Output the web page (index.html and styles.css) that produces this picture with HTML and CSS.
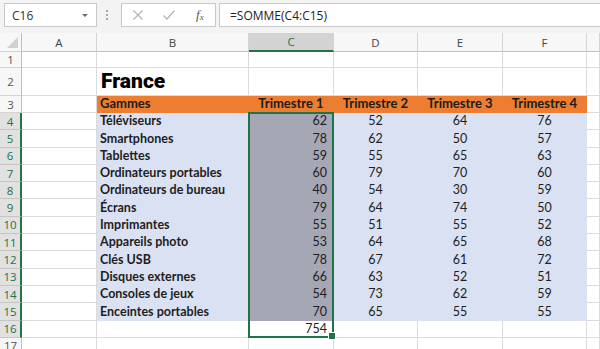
FILE: index.html
```html
<!DOCTYPE html>
<html lang="fr">

<head>
    <meta charset="UTF-8">
    <meta name="viewport" content="width=device-width, initial-scale=1.0">
    <title>France - Ventes par trimestre</title>
    <link rel="stylesheet" href="styles.css">
</head>

<body>
    <div class="formula-bar">
        <div class="name-box">
            <span>C16</span>
            <span class="caret"></span>
        </div>
        <div class="grip"><i></i><i></i><i></i></div>
        <div class="fx-buttons">
            <svg class="icon" width="12" height="12" viewBox="0 0 12 12">
                <path d="M1.5 1.5 L10.5 10.5 M10.5 1.5 L1.5 10.5" stroke="#b4b4b4" stroke-width="1.2" fill="none"/>
            </svg>
            <svg class="icon" width="14" height="12" viewBox="0 0 14 12">
                <path d="M1.5 6.5 L5 10 L12.5 1.5" stroke="#b4b4b4" stroke-width="1.3" fill="none"/>
            </svg>
            <span class="fx">f<sub>x</sub></span>
        </div>
        <div class="formula">=SOMME(C4:C15)</div>
    </div>

    <div class="sheet">
        <div class="row">
            <div class="hd corner"><span class="tri"></span></div>
            <div class="hd col">A</div>
            <div class="hd col">B</div>
            <div class="hd col active">C</div>
            <div class="hd col">D</div>
            <div class="hd col">E</div>
            <div class="hd col">F</div>
            <div class="hd col"></div>
        </div>
        <div class="row">
            <div class="hd num">1</div>
            <div class="c"></div><div class="c"></div><div class="c"></div><div class="c"></div><div class="c"></div><div class="c"></div><div class="c"></div>
        </div>
        <div class="row">
            <div class="hd num">2</div>
            <div class="c"></div>
            <div class="c title">France</div>
            <div class="c"></div><div class="c"></div><div class="c"></div><div class="c"></div><div class="c"></div>
        </div>
        <div class="row">
            <div class="hd num">3</div>
            <div class="c"></div>
            <div class="c head left">Gammes</div>
            <div class="c head">Trimestre 1</div>
            <div class="c head">Trimestre 2</div>
            <div class="c head">Trimestre 3</div>
            <div class="c head">Trimestre 4</div>
            <div class="c"></div>
        </div>
        <div class="row">
            <div class="hd num sel">4</div>
            <div class="c"></div>
            <div class="c band label">Téléviseurs</div>
            <div class="c band picked">62</div>
            <div class="c band">52</div><div class="c band">64</div><div class="c band">76</div>
            <div class="c"></div>
        </div>
        <div class="row">
            <div class="hd num sel">5</div>
            <div class="c"></div>
            <div class="c band label">Smartphones</div>
            <div class="c band picked">78</div>
            <div class="c band">62</div><div class="c band">50</div><div class="c band">57</div>
            <div class="c"></div>
        </div>
        <div class="row">
            <div class="hd num sel">6</div>
            <div class="c"></div>
            <div class="c band label">Tablettes</div>
            <div class="c band picked">59</div>
            <div class="c band">55</div><div class="c band">65</div><div class="c band">63</div>
            <div class="c"></div>
        </div>
        <div class="row">
            <div class="hd num sel">7</div>
            <div class="c"></div>
            <div class="c band label">Ordinateurs portables</div>
            <div class="c band picked">60</div>
            <div class="c band">79</div><div class="c band">70</div><div class="c band">60</div>
            <div class="c"></div>
        </div>
        <div class="row">
            <div class="hd num sel">8</div>
            <div class="c"></div>
            <div class="c band label">Ordinateurs de bureau</div>
            <div class="c band picked">40</div>
            <div class="c band">54</div><div class="c band">30</div><div class="c band">59</div>
            <div class="c"></div>
        </div>
        <div class="row">
            <div class="hd num sel">9</div>
            <div class="c"></div>
            <div class="c band label">Écrans</div>
            <div class="c band picked">79</div>
            <div class="c band">64</div><div class="c band">74</div><div class="c band">50</div>
            <div class="c"></div>
        </div>
        <div class="row">
            <div class="hd num sel">10</div>
            <div class="c"></div>
            <div class="c band label">Imprimantes</div>
            <div class="c band picked">55</div>
            <div class="c band">51</div><div class="c band">55</div><div class="c band">52</div>
            <div class="c"></div>
        </div>
        <div class="row">
            <div class="hd num sel">11</div>
            <div class="c"></div>
            <div class="c band label">Appareils photo</div>
            <div class="c band picked">53</div>
            <div class="c band">64</div><div class="c band">65</div><div class="c band">68</div>
            <div class="c"></div>
        </div>
        <div class="row">
            <div class="hd num sel">12</div>
            <div class="c"></div>
            <div class="c band label">Clés USB</div>
            <div class="c band picked">78</div>
            <div class="c band">67</div><div class="c band">61</div><div class="c band">72</div>
            <div class="c"></div>
        </div>
        <div class="row">
            <div class="hd num sel">13</div>
            <div class="c"></div>
            <div class="c band label">Disques externes</div>
            <div class="c band picked">66</div>
            <div class="c band">63</div><div class="c band">52</div><div class="c band">51</div>
            <div class="c"></div>
        </div>
        <div class="row">
            <div class="hd num sel">14</div>
            <div class="c"></div>
            <div class="c band label">Consoles de jeux</div>
            <div class="c band picked">54</div>
            <div class="c band">73</div><div class="c band">62</div><div class="c band">59</div>
            <div class="c"></div>
        </div>
        <div class="row">
            <div class="hd num sel">15</div>
            <div class="c"></div>
            <div class="c band label">Enceintes portables</div>
            <div class="c band picked">70</div>
            <div class="c band">65</div><div class="c band">55</div><div class="c band">55</div>
            <div class="c"></div>
        </div>
        <div class="row">
            <div class="hd num sel">16</div>
            <div class="c"></div>
            <div class="c"></div>
            <div class="c total">754</div>
            <div class="c"></div><div class="c"></div><div class="c"></div><div class="c"></div>
        </div>
        <div class="row">
            <div class="hd num">17</div>
            <div class="c"></div><div class="c"></div><div class="c"></div><div class="c"></div><div class="c"></div><div class="c"></div><div class="c"></div>
        </div>

        <div class="selection"></div>
    </div>
</body>

</html>
```

FILE: styles.css
```css
* {
    box-sizing: border-box;
}

body {
    margin: 0;
    width: 600px;
    height: 349px;
    overflow: hidden;
    background: #ffffff;
    font-family: Lato, "Liberation Sans", sans-serif;
    color: #1e1e1e;
}

/* formula bar */

.formula-bar {
    display: flex;
    align-items: flex-start;
    height: 33px;
    padding: 3px 0 0 4px;
    background: #f3f3f3;
}

.name-box {
    display: flex;
    align-items: center;
    justify-content: space-between;
    width: 93px;
    height: 24px;
    padding: 0 8px 0 7px;
    background: #ffffff;
    border: 1px solid #c8c8c8;
    font-family: "Open Sans", sans-serif;
    font-size: 12px;
    color: #333333;
}

.caret {
    width: 0;
    height: 0;
    border-left: 3px solid transparent;
    border-right: 3px solid transparent;
    border-top: 3px solid #6d6d6d;
}

.grip {
    display: flex;
    flex-direction: column;
    gap: 2px;
    width: 24px;
    padding: 7px 0 0 9px;
}

.grip i {
    display: block;
    width: 2px;
    height: 2px;
    background: #a8a8a8;
}

.fx-buttons {
    display: flex;
    align-items: center;
    width: 95px;
    height: 24px;
    padding-left: 10px;
    background: #ffffff;
    border: 1px solid #c8c8c8;
}

.fx-buttons .icon:first-child {
    margin-right: 18px;
}

.fx-buttons .icon {
    margin-right: 20px;
}

.fx {
    font-family: "Liberation Serif", serif;
    font-style: italic;
    font-size: 13px;
    color: #555555;
}

.fx sub {
    font-size: 9px;
    vertical-align: -1px;
}

.formula {
    flex: 1;
    height: 24px;
    margin-left: 3px;
    padding: 3px 0 0 10px;
    background: #ffffff;
    border: 1px solid #c8c8c8;
    border-right: none;
    font-family: "Open Sans", sans-serif;
    font-size: 12px;
    color: #222222;
}

/* sheet grid */

.sheet {
    position: relative;
    display: grid;
    grid-template-columns: 22px 75px 152px 85px 84px 85px 84px 1fr;
    grid-template-rows: 19px 16px 28px 17px repeat(13, 17.3px) 1fr;
    height: 316px;
    font-size: 12.5px;
}

.row {
    display: contents;
}

.c {
    display: flex;
    align-items: flex-end;
    justify-content: center;
    padding: 0 3px 1px;
    border-right: 1px solid #dadada;
    border-bottom: 1px solid #dadada;
    overflow: hidden;
    white-space: nowrap;
}

.hd {
    display: flex;
    align-items: center;
    justify-content: center;
    background: #f7f7f7;
    border-right: 1px solid #d4d4d4;
    border-bottom: 1px solid #d4d4d4;
    font-family: "Open Sans", sans-serif;
    font-size: 11.5px;
    color: #444444;
}

.corner {
    position: relative;
    border-right-color: #c0c0c0;
}

.tri {
    position: absolute;
    right: 3px;
    bottom: 3px;
    width: 0;
    height: 0;
    border-left: 11px solid transparent;
    border-bottom: 11px solid #d0d0d0;
}

.col {
    border-bottom-color: #c0c0c0;
}

.col.active {
    background: #d3d3d3;
    color: #217346;
    border-bottom: 2px solid #217346;
}

.num {
    color: #555555;
    border-right-color: #c0c0c0;
}

.num.sel {
    background: #e1e1e1;
    color: #217346;
    border-right: 2px solid #217346;
    border-bottom-color: #c4c4c4;
}

.title {
    justify-content: flex-start;
    padding: 0 0 2px 4px;
    font-family: Roboto, "Liberation Sans", sans-serif;
    font-weight: 900;
    font-size: 21px;
    color: #000000;
}

.head {
    background: #ed7d31;
    border-color: #ed7d31;
    font-weight: 700;
    font-size: 13px;
    color: #1c1c1c;
}

.head.left,
.label {
    justify-content: flex-start;
}

.label {
    font-weight: 700;
}

.band {
    background: #d9e1f2;
    border-color: #d9e1f2;
}

.band.picked {
    justify-content: flex-end;
    padding-right: 6px;
    background: #a5a8b4;
    border-color: #a5a8b4;
}

.total {
    justify-content: flex-end;
    padding-right: 6px;
}

/* absolutely placed in the C4:C16 grid area, so it stays out of auto-placement */
.selection {
    position: absolute;
    grid-column: 4 / 5;
    grid-row: 5 / 18;
    top: -1px;
    left: -1px;
    right: 0;
    bottom: 0;
    border: 2px solid #217346;
    pointer-events: none;
}

.selection::after {
    content: "";
    position: absolute;
    right: -4px;
    bottom: -4px;
    width: 6px;
    height: 6px;
    background: #217346;
    border: 1px solid #ffffff;
}
```
